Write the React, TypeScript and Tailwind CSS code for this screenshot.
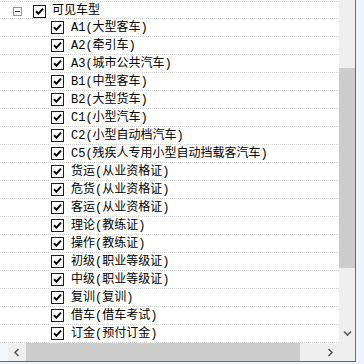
const items = [
  "A1(大型客车)",
  "A2(牵引车)",
  "A3(城市公共汽车)",
  "B1(中型客车)",
  "B2(大型货车)",
  "C1(小型汽车)",
  "C2(小型自动档汽车)",
  "C5(残疾人专用小型自动挡载客汽车)",
  "货运(从业资格证)",
  "危货(从业资格证)",
  "客运(从业资格证)",
  "理论(教练证)",
  "操作(教练证)",
  "初级(职业等级证)",
  "中级(职业等级证)",
  "复训(复训)",
  "借车(借车考试)",
  "订金(预付订金)",
];

function Check() {
  return (
    <div className="w-[13px] h-[13px] shrink-0 border border-[#1e1e1e] bg-white flex items-center justify-center">
      <svg width="9" height="9" viewBox="0 0 9 9">
        <path d="M1 4.2 L3.4 6.6 L8 1.6" fill="none" stroke="#000" strokeWidth="2" />
      </svg>
    </div>
  );
}

function Chevron({ dir }: { dir: "down" | "left" | "right" }) {
  const d =
    dir === "down" ? "M1 1.5 L4.5 5 L8 1.5" : dir === "left" ? "M5.5 1 L2 4.5 L5.5 8" : "M2.5 1 L6 4.5 L2.5 8";
  return (
    <svg width="9" height="9" viewBox="0 0 9 9">
      <path d={d} fill="none" stroke="#5a5a5a" strokeWidth="1.6" />
    </svg>
  );
}

export default function App() {
  return (
    <div className="w-[364px] h-[364px] overflow-hidden bg-[#eef5fc]">
      <div className="w-[356px] h-[362px] bg-white border-r border-b border-[#6a6a6a] flex flex-col">
        {/* tree + vertical scrollbar */}
        <div className="flex h-[343px]">
          <div
            className="w-[339px] overflow-hidden pt-[1px] text-[12px] text-black"
            style={{ fontFamily: '"Liberation Mono", "Noto Sans CJK SC", monospace' }}
          >
            <div className="h-[18px] flex items-center border-t border-b border-dotted border-[#d6d6d6]">
              <div className="ml-[13px] w-[9px] h-[9px] border border-[#939393] bg-white flex items-center justify-center mt-[2px]">
                <div className="w-[5px] h-px bg-[#4b4b4b]" />
              </div>
              <div className="ml-[11px] mt-[2px]">
                <Check />
              </div>
              <span className="ml-[6px] mt-[1px] leading-[18px]">可见车型</span>
            </div>
            {items.map((t) => (
              <div key={t} className="h-[18px] flex items-center border-b border-dotted border-[#d6d6d6]">
                <div className="ml-[51px]">
                  <Check />
                </div>
                <span className="ml-[7px] mt-[1px] leading-[18px] whitespace-nowrap">{t}</span>
              </div>
            ))}
          </div>
          <div className="w-[16px] bg-[#efefef] flex flex-col">
            <div className="h-[68px]" />
            <div className="h-[200px] bg-[#cdcdcd]" />
            <div className="flex-1" />
            <div className="h-[17px] flex items-center justify-center">
              <Chevron dir="down" />
            </div>
          </div>
        </div>
        {/* horizontal scrollbar */}
        <div className="flex h-[18px]">
          <div className="w-[8px] bg-[#f3f8fd]" />
          <div className="w-[18px] bg-[#efefef] flex items-center justify-center">
            <Chevron dir="left" />
          </div>
          <div className="w-[274px] bg-[#cdcdcd]" />
          <div className="w-[22px] bg-[#efefef]" />
          <div className="w-[17px] bg-[#efefef] flex items-center justify-center">
            <Chevron dir="right" />
          </div>
          <div className="w-[16px] bg-[#efefef]" />
        </div>
      </div>
    </div>
  );
}
